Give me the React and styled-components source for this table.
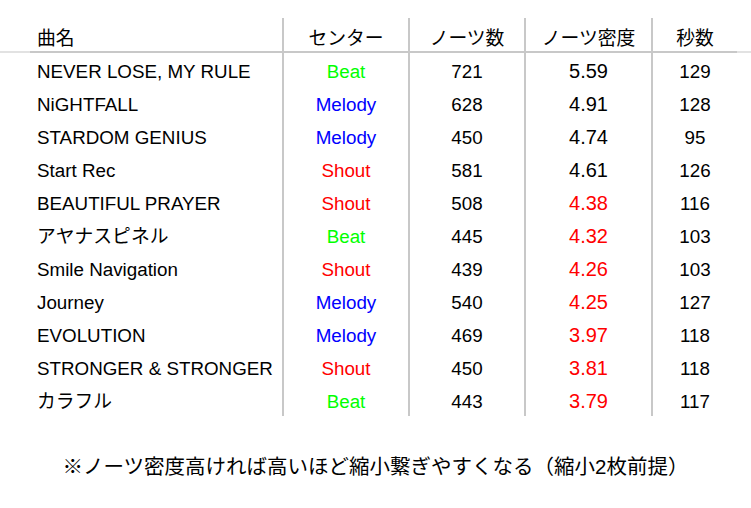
import React from "react";
import styled, { createGlobalStyle } from "styled-components";

const GlobalStyle = createGlobalStyle`
  html, body {
    margin: 0;
    padding: 0;
    background: #ffffff;
  }
  body {
    font-family: "Liberation Sans", "Noto Sans CJK JP", sans-serif;
    color: #000000;
  }
`;

const COLS = "30px 252px 126px 116px 127px 86px 1fr";

const Page = styled.div`
  width: 751px;
  padding-top: 18px;
`;

const Row = styled.div`
  display: grid;
  grid-template-columns: ${COLS};
  height: ${(p) => (p.$head ? "35px" : "33px")};
`;

const Spacer = styled.div`
  box-sizing: border-box;
  border-bottom: ${(p) => (p.$head ? "2px solid #e2e2e2" : "none")};
`;

const Cell = styled.div`
  box-sizing: border-box;
  height: 100%;
  padding-top: ${(p) => (p.$head ? "5px" : "4px")};
  padding-left: ${(p) => (p.$first ? "7px" : "0")};
  text-align: ${(p) => (p.$first ? "left" : "center")};
  border-left: ${(p) => (p.$first ? "none" : "2px solid #c8c8c8")};
  border-bottom: ${(p) => (p.$head ? "2px solid #c8c8c8" : "none")};
  line-height: ${(p) => (p.$head ? "28px" : "29px")};
  font-size: ${(p) => (p.$big ? "20px" : "18.8px")};
  font-family: ${(p) =>
    p.$head
      ? '"Noto Sans CJK JP", "Liberation Sans", sans-serif'
      : '"Liberation Sans", "Noto Sans CJK JP", sans-serif'};
  color: ${(p) => p.$color || "#000000"};
  white-space: nowrap;
`;

const Note = styled.p`
  margin: 39px 0 0;
  text-align: center;
  font-size: 20.5px;
  line-height: 24px;
  font-family: "Liberation Sans", "Noto Sans CJK JP", sans-serif;
  color: #000000;
`;

const CENTER_COLORS = {
  Beat: "#00ff00",
  Melody: "#0000ff",
  Shout: "#ff0000",
};

const songs = [
  ["NEVER LOSE, MY RULE", "Beat", 721, "5.59", 129],
  ["NiGHTFALL", "Melody", 628, "4.91", 128],
  ["STARDOM GENIUS", "Melody", 450, "4.74", 95],
  ["Start Rec", "Shout", 581, "4.61", 126],
  ["BEAUTIFUL PRAYER", "Shout", 508, "4.38", 116],
  ["アヤナスピネル", "Beat", 445, "4.32", 103],
  ["Smile Navigation", "Shout", 439, "4.26", 103],
  ["Journey", "Melody", 540, "4.25", 127],
  ["EVOLUTION", "Melody", 469, "3.97", 118],
  ["STRONGER & STRONGER", "Shout", 450, "3.81", 118],
  ["カラフル", "Beat", 443, "3.79", 117],
];

export default function App() {
  return (
    <>
      <GlobalStyle />
      <Page>
        <Row $head>
          <Spacer $head />
          <Cell $head $first>曲名</Cell>
          <Cell $head>センター</Cell>
          <Cell $head>ノーツ数</Cell>
          <Cell $head>ノーツ密度</Cell>
          <Cell $head>秒数</Cell>
          <Spacer $head />
        </Row>
        {songs.map(([name, center, notes, density, secs]) => (
          <Row key={name}>
            <Spacer />
            <Cell $first>{name}</Cell>
            <Cell $color={CENTER_COLORS[center]}>{center}</Cell>
            <Cell>{notes}</Cell>
            <Cell $big $color={parseFloat(density) < 4.5 ? "#ff0000" : "#000000"}>
              {density}
            </Cell>
            <Cell>{secs}</Cell>
            <Spacer />
          </Row>
        ))}
        <Note>※ノーツ密度高ければ高いほど縮小繋ぎやすくなる（縮小2枚前提）</Note>
      </Page>
    </>
  );
}
